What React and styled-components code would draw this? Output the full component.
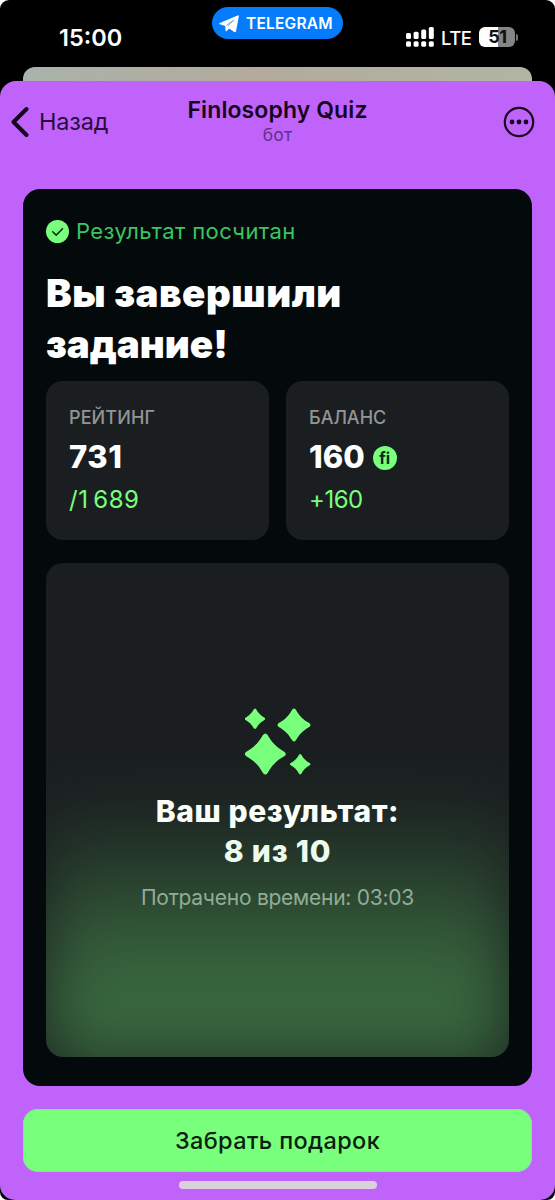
import React from "react";
import styled, { createGlobalStyle } from "styled-components";

const GlobalStyle = createGlobalStyle`
  * { box-sizing: border-box; }
  body { margin: 0; background: #fff; font-family: Inter, "Liberation Sans", sans-serif; }
  h1, h2, p { margin: 0; }
`;

const Label = styled.span`
  display: block;
  white-space: nowrap;
  font-size: ${(p) => p.$size}px;
  line-height: ${(p) => p.$line}px;
  font-weight: ${(p) => p.$weight || 400};
  letter-spacing: ${(p) => p.$track || 0}px;
  color: ${(p) => p.$color || "#fff"};
`;

const Phone = styled.div`
  width: 555px;
  height: 1200px;
  display: flex;
  flex-direction: column;
  background: #000;
  border-radius: 9px 9px 8px 8px;
  overflow: hidden;
`;

const StatusBar = styled.header`
  height: 67px;
  display: grid;
  grid-template-columns: 212px 131px 1fr;
  align-items: start;
`;

const Clock = styled.div`
  padding: 24px 0 0 59px;
`;

const AppPill = styled.div`
  margin-top: 7px;
  height: 32px;
  border-radius: 16px;
  background: #047cfb;
  display: flex;
  align-items: center;
  gap: 7px;
  padding: 1px 0 0 7px;
`;

const Indicators = styled.div`
  display: flex;
  align-items: center;
  height: 28px;
  margin-top: 23px;
  padding-left: 63px;
`;

const Network = styled.div`
  margin: 2px 8px 0 7px;
`;

const Battery = styled.div`
  width: 36px;
  height: 20px;
  border-radius: 6px;
  background: linear-gradient(90deg, #fff 19px, #858585 19px);
  display: flex;
  justify-content: center;
`;

const BatteryTip = styled.i`
  width: 2px;
  height: 7px;
  margin-left: 1px;
  border-radius: 0 2px 2px 0;
  background: #777;
`;

const BackSheet = styled.div`
  height: 28px;
  flex: none;
  margin: 0 23px -14px;
  border-radius: 12px 12px 0 0;
  background: linear-gradient(90deg, #a9b3ab, #b3ab9e 45%, #b0b5a4);
`;

const Sheet = styled.main`
  flex: 1;
  display: flex;
  flex-direction: column;
  background: #c063fb;
  border-radius: 16px 16px 15px 15px;
  padding: 0 23px;
`;

const NavBar = styled.nav`
  height: 108px;
  margin: 0 -23px;
  display: grid;
  grid-template-columns: 150px 1fr 150px;
  align-items: start;
`;

const Back = styled.div`
  display: flex;
  align-items: center;
  gap: 10px;
  padding: 25px 0 0 10px;
`;

const Heading = styled.div`
  padding-top: 14px;
  display: flex;
  flex-direction: column;
  align-items: center;
`;

const More = styled.div`
  display: flex;
  justify-content: flex-end;
  padding: 25px 20px 0 0;
`;

const Card = styled.section`
  height: 897px;
  background: #040a0c;
  border-radius: 17px;
  padding: 28px 23px 29px;
  display: flex;
  flex-direction: column;
`;

const Status = styled.div`
  height: 28px;
  display: flex;
  align-items: center;
  gap: 7px;
  margin-bottom: 23px;
`;

const Title = styled.h1`
  height: 113px;
  font-weight: inherit;
`;

const Stats = styled.div`
  display: grid;
  grid-template-columns: 1fr 1fr;
  gap: 17px;
  margin-bottom: 23px;
`;

const Stat = styled.div`
  height: 159px;
  border-radius: 17px;
  background: #1a1e20;
  padding: 25px 23px;
`;

const Value = styled.div`
  display: flex;
  align-items: center;
  gap: 8px;
  height: 32px;
  margin: 11px 0 13px;
`;

const Coin = styled.div`
  width: 24px;
  height: 24px;
  border-radius: 50%;
  background: #78ff7c;
  display: flex;
  justify-content: center;
  margin-top: 1px;
`;

const Result = styled.div`
  flex: 1;
  position: relative;
  overflow: hidden;
  border-radius: 17px;
  background: #1a1e20;
  display: flex;
  flex-direction: column;
  align-items: center;
  padding-top: 145px;

  &::before {
    content: "";
    position: absolute;
    left: -4px;
    right: -4px;
    top: 225px;
    height: 284px;
    background: linear-gradient(rgba(120, 255, 124, 0), #78ff7c 66%);
    opacity: 0.32;
    filter: blur(34px);
  }
  > * { position: relative; }
`;

const ResultTitle = styled.h2`
  margin-top: 16px;
  font-weight: inherit;
  display: flex;
  flex-direction: column;
  align-items: center;
`;

const Spent = styled.p`
  margin-top: 12px;
`;

const Button = styled.div`
  height: 63px;
  margin-top: 23px;
  border-radius: 15px;
  background: #78ff7c;
  box-shadow: inset 0 0 0 1px #8fdc9c;
  display: flex;
  align-items: center;
  justify-content: center;
`;

const HomeBar = styled.div`
  width: 198px;
  height: 8px;
  border-radius: 4px;
  background: #d8d2dd;
  margin: 9px auto 0;
`;

const Plane = () => (
  <svg width="20" height="18" viewBox="0 0 20 18">
    <path fill="#fff" d="M.8 8.1 18.6.4c.8-.3 1.4.1 1.2 1.1l-2.7 14.6c-.2 1-.9 1.3-1.8.8l-9-5.8L.8 9.3C-.1 9-.1 8.5.8 8.1Z" />
    <path fill="#fff" d="m6.2 10 .3 5.6c.1.8.6.9 1.2.3l3-3Z" />
    <path d="M7.5 10.3 14.4 5.4 8.4 11.4" fill="none" stroke="#047cfb" strokeWidth=".6" strokeLinejoin="round" />
  </svg>
);

const Signal = () => (
  <svg width="28" height="20" viewBox="0 0 28 20" fill="#fff">
    {[0, 1, 2, 3].map((i) => (
      <React.Fragment key={i}>
        <rect x={i * 7.6} y={[6, 4.7, 2.5, 0][i]} width="5" height={[6, 7.3, 9.5, 12][i]} rx="1.5" />
        <rect x={i * 7.6} y="14.2" width="5" height="5.6" rx="1.6" />
      </React.Fragment>
    ))}
  </svg>
);

const Chevron = () => (
  <svg width="19" height="32" viewBox="0 0 19 32" fill="none" stroke="#17051f" strokeWidth="4" strokeLinecap="round" strokeLinejoin="round">
    <path d="M16.5 3 3.5 16l13 13" />
  </svg>
);

const Dots = () => (
  <svg width="32" height="32" viewBox="0 0 32 32" fill="#17051f">
    <circle cx="16" cy="16" r="14.2" fill="none" stroke="#17051f" strokeWidth="2.2" />
    <circle cx="9" cy="16" r="2.4" />
    <circle cx="16" cy="16" r="2.4" />
    <circle cx="23" cy="16" r="2.4" />
  </svg>
);

const Check = () => (
  <svg width="23" height="23" viewBox="0 0 23 23">
    <circle cx="11.5" cy="11.5" r="11.5" fill="#78ff7c" />
    <path d="m6.7 11.7 3.5 3.4 6.3-6.3" fill="none" stroke="#0b2a12" strokeWidth="1.5" strokeLinecap="round" strokeLinejoin="round" />
  </svg>
);

const star = "M-2.3-18.6Q0-21.6 2.3-18.6C6.6-11 11-6.6 18.6-2.3Q21.6 0 18.6 2.3C11 6.6 6.6 11 2.3 18.6Q0 21.6-2.3 18.6C-6.6 11-11 6.6-18.6 2.3Q-21.6 0-18.6-2.3C-11-6.6-6.6-11-2.3-18.6Z";

const Sparkles = () => (
  <svg width="66" height="67" viewBox="0 0 66 67" fill="#78ff7c">
    <path d={star} transform="translate(10 10.8) scale(.51)" />
    <path d={star} transform="translate(49 17) scale(.82)" />
    <path d={star} transform="translate(20.3 46) scale(1.02)" />
    <path d={star} transform="translate(55.2 56.2) scale(.51)" />
  </svg>
);

export default function App() {
  return (
    <>
      <GlobalStyle />
      <Phone>
        <StatusBar>
          <Clock><Label $size={23.5} $line={28} $weight={600}>15:00</Label></Clock>
          <AppPill>
            <Plane />
            <Label $size={15.5} $line={20} $weight={600} $track={0.2}>TELEGRAM</Label>
          </AppPill>
          <Indicators>
            <Signal />
            <Network><Label $size={18.5} $line={24} $weight={500} $track={-0.5}>LTE</Label></Network>
            <Battery><Label $size={18} $line={20} $weight={700} $track={-0.5} $color="#111">51</Label></Battery>
            <BatteryTip />
          </Indicators>
        </StatusBar>
        <BackSheet />
        <Sheet>
          <NavBar>
            <Back>
              <Chevron />
              <Label $size={23.5} $line={32} $track={-0.2} $color="#2b0c3c">Назад</Label>
            </Back>
            <Heading>
              <Label $size={23} $line={30} $weight={600} $track={0.1} $color="#17051f">Finlosophy Quiz</Label>
              <Label $size={17.5} $line={20} $track={0.2} $color="#64308a">бот</Label>
            </Heading>
            <More><Dots /></More>
          </NavBar>
          <Card>
            <Status>
              <Check />
              <Label $size={22} $line={28} $track={0.4} $color="#3cc463">Результат посчитан</Label>
            </Status>
            <Title>
              <Label $size={38.5} $line={51} $weight={900} $track={0.5}>Вы завершили</Label>
              <Label $size={38.5} $line={51} $weight={900} $track={0}>задание!</Label>
            </Title>
            <Stats>
              <Stat>
                <Label $size={18} $line={24} $weight={500} $track={0.1} $color="#929596">РЕЙТИНГ</Label>
                <Value><Label $size={31} $line={32} $weight={800} $track={0.6}>731</Label></Value>
                <Label $size={24} $line={28} $track={0.5} $color="#78ff7c">/1&#8201;689</Label>
              </Stat>
              <Stat>
                <Label $size={18} $line={24} $weight={500} $color="#929596">БАЛАНС</Label>
                <Value>
                  <Label $size={31} $line={32} $weight={800}>160</Label>
                  <Coin><Label $size={16} $line={24} $weight={700} $color="#10251b">fi</Label></Coin>
                </Value>
                <Label $size={24} $line={28} $track={-0.5} $color="#78ff7c">+160</Label>
              </Stat>
            </Stats>
            <Result>
              <Sparkles />
              <ResultTitle>
                <Label $size={30} $line={40} $weight={800} $track={0.6} $color="#fafffa">Ваш результат:</Label>
                <Label $size={30} $line={40} $weight={800} $track={0.8} $color="#ecfbee">8 из 10</Label>
              </ResultTitle>
              <Spent><Label $size={21} $line={30} $track={-0.25} $color="#92ac96">Потрачено времени: 03:03</Label></Spent>
            </Result>
          </Card>
          <Button><Label $size={23.5} $line={30} $weight={500} $track={0.35} $color="#0a1f0f">Забрать подарок</Label></Button>
          <HomeBar />
        </Sheet>
      </Phone>
    </>
  );
}
